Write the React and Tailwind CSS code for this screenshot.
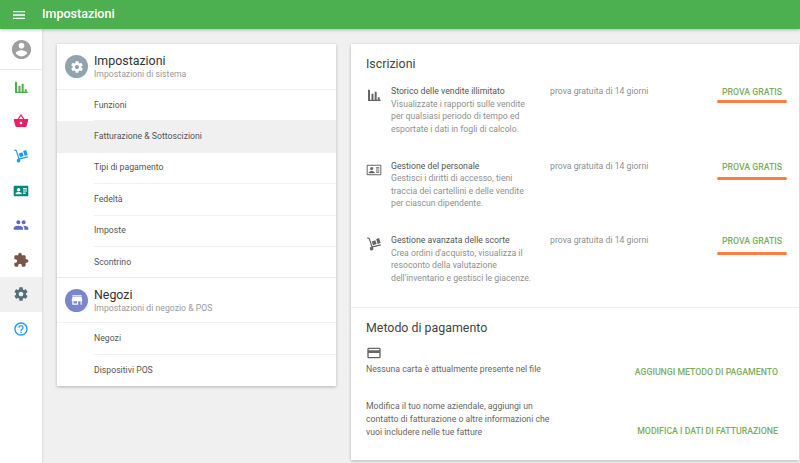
const ICONS = {
  menu: 'M3 18h18v-2H3v2zm0-5h18v-2H3v2zm0-7v2h18V6H3z',
  account: 'M12 2C6.48 2 2 6.48 2 12s4.48 10 10 10 10-4.48 10-10S17.52 2 12 2zm0 3c1.66 0 3 1.34 3 3s-1.34 3-3 3-3-1.34-3-3 1.34-3 3-3zm0 14.2c-2.5 0-4.71-1.28-6-3.22.03-1.99 4-3.08 6-3.08 1.99 0 5.97 1.09 6 3.08-1.29 1.94-3.5 3.22-6 3.22z',
  settings: 'M19.43 12.98c.04-.32.07-.64.07-.98s-.03-.66-.07-.98l2.11-1.65c.19-.15.24-.42.12-.64l-2-3.46c-.12-.22-.39-.3-.61-.22l-2.49 1c-.52-.4-1.08-.73-1.69-.98l-.38-2.65C14.46 2.18 14.25 2 14 2h-4c-.25 0-.46.18-.49.42l-.38 2.65c-.61.25-1.17.59-1.69.98l-2.49-1c-.23-.09-.49 0-.61.22l-2 3.46c-.13.22-.07.49.12.64l2.11 1.65c-.04.32-.07.65-.07.98s.03.66.07.98l-2.11 1.65c-.19.15-.24.42-.12.64l2 3.46c.12.22.39.3.61.22l2.49-1c.52.4 1.08.73 1.69.98l.38 2.65c.03.24.24.42.49.42h4c.25 0 .46-.18.49-.42l.38-2.65c.61-.25 1.17-.59 1.69-.98l2.49 1c.23.09.49 0 .61-.22l2-3.46c.12-.22.07-.49-.12-.64l-2.11-1.65zM12 15.5c-1.93 0-3.5-1.57-3.5-3.5s1.57-3.5 3.5-3.5 3.5 1.57 3.5 3.5-1.57 3.5-3.5 3.5z',
  people: 'M16 11c1.66 0 2.99-1.34 2.99-3S17.66 5 16 5c-1.66 0-3 1.34-3 3s1.34 3 3 3zm-8 0c1.66 0 2.99-1.34 2.99-3S9.66 5 8 5C6.34 5 5 6.34 5 8s1.34 3 3 3zm0 2c-2.33 0-7 1.17-7 3.5V19h14v-2.5c0-2.33-4.67-3.5-7-3.5zm8 0c-.29 0-.62.02-.97.05 1.16.84 1.97 1.97 1.97 3.45V19h6v-2.5c0-2.33-4.67-3.5-7-3.5z',
  extension: 'M20.5 11H19V7c0-1.1-.9-2-2-2h-4V3.5C13 2.12 11.88 1 10.5 1S8 2.12 8 3.5V5H4c-1.1 0-1.99.9-1.99 2v3.8H3.5c1.49 0 2.7 1.21 2.7 2.7s-1.21 2.7-2.7 2.7H2V20c0 1.1.9 2 2 2h3.8v-1.5c0-1.49 1.21-2.7 2.7-2.7 1.49 0 2.7 1.21 2.7 2.7V22H17c1.1 0 2-.9 2-2v-4h1.5c1.38 0 2.5-1.12 2.5-2.5S21.88 11 20.5 11z',
  help: 'M11 18h2v-2h-2v2zm1-16C6.48 2 2 6.48 2 12s4.48 10 10 10 10-4.48 10-10S17.52 2 12 2zm0 18c-4.41 0-8-3.59-8-8s3.59-8 8-8 8 3.59 8 8-3.59 8-8 8zm0-14c-2.21 0-4 1.79-4 4h2c0-1.1.9-2 2-2s2 .9 2 2c0 2-3 1.75-3 5h2c0-2.25 3-2.5 3-5 0-2.21-1.79-4-4-4z',
  store: 'M20 4H4v2h16V4zm1 10v-2l-1-5H4l-1 5v2h1v6h10v-6h4v6h2v-6h1zm-9 4H6v-4h6v4z',
  card: 'M20 4H4c-1.11 0-1.99.89-1.99 2L2 18c0 1.11.89 2 2 2h16c1.11 0 2-.89 2-2V6c0-1.11-.89-2-2-2zm0 14H4v-6h16v6zm0-10H4V6h16v2z',
  basket: 'M17.21 9l-4.38-6.56c-.19-.28-.51-.42-.83-.42-.32 0-.64.14-.83.43L6.79 9H2c-.55 0-1 .45-1 1 0 .09.01.18.04.27l2.54 9.27c.23.84 1 1.46 1.92 1.46h13c.92 0 1.69-.62 1.93-1.46l2.54-9.27L23 10c0-.55-.45-1-1-1h-4.79zM9 9l3-4.4L15 9H9zm3 8c-1.1 0-2-.9-2-2s.9-2 2-2 2 .9 2 2-.9 2-2 2z',
  // drawn by hand, nothing close in the packs
  sales: 'M3 4h3v15h2.2v-9h3v9h1.8V7h3v12h1.6v-3.5h3V19H22v2H3V4z',
  cart: 'M1.5 3.2l.8-1.5 3.4 1.8 4 12 12.3-3 .4 1.7-12 3a2.7 2.7 0 1 1-2.5-.9L4.4 4.8 1.5 3.2zM8.6 8.4l5.4-2 2 5.6-5.4 2-2-5.6zm6.6-3.9l4.4-1.5 2.4 7.4-4.4 1.5-2.4-7.4z',
  badge: 'M2.5 4h19A1.5 1.5 0 0 1 23 5.5v13a1.5 1.5 0 0 1-1.5 1.5h-19A1.5 1.5 0 0 1 1 18.5v-13A1.5 1.5 0 0 1 2.5 4zM8.5 7.5a2.6 2.6 0 1 0 0 5.2 2.6 2.6 0 0 0 0-5.2zM3.8 17h9.4v-1.2c0-1.7-3.1-2.4-4.7-2.4s-4.7.7-4.7 2.4V17zM15 8v1.6h6V8h-6zm0 3.2v1.6h6v-1.6h-6zm0 3.2V16h4v-1.6h-4z',
  badgeOutline: 'M2.5 4h19A1.5 1.5 0 0 1 23 5.5v13a1.5 1.5 0 0 1-1.5 1.5h-19A1.5 1.5 0 0 1 1 18.5v-13A1.5 1.5 0 0 1 2.5 4zm0 1.5v13h19v-13h-19zM8.5 7.5a2.4 2.4 0 1 1 0 4.8 2.4 2.4 0 0 1 0-4.8zM4 17v-1.2c0-1.6 3-2.4 4.5-2.4s4.5.8 4.5 2.4V17H4zm11-9h5v1.6h-5V8zm0 3.2h5v1.6h-5v-1.6zm0 3.2h5V16h-5v-1.6z',
};

function Icon({ name, className }) {
  return (
    <svg viewBox="0 0 24 24" className={className} fill="currentColor" fillRule="evenodd">
      <path d={ICONS[name]} />
    </svg>
  );
}

const NAV = [
  { icon: 'sales', color: 'text-[#4caf50]' },
  { icon: 'basket', color: 'text-[#e91e63]' },
  { icon: 'cart', color: 'text-[#2196f3]' },
  { icon: 'badge', color: 'text-[#00897b]' },
  { icon: 'people', color: 'text-[#5c6bc0]' },
  { icon: 'extension', color: 'text-[#795548]' },
  { icon: 'settings', color: 'text-[#546e7a]', active: true },
  { icon: 'help', color: 'text-[#2196f3]' },
];

const PLANS = [
  {
    icon: 'sales',
    title: 'Storico delle vendite illimitato',
    lines: ['Visualizzate i rapporti sulle vendite', 'per qualsiasi periodo di tempo ed', 'esportate i dati in fogli di calcolo.'],
    barGap: 'mt-[0px]',
  },
  {
    icon: 'badgeOutline',
    title: 'Gestione del personale',
    lines: ['Gestisci i diritti di accesso, tieni', 'traccia dei cartellini e delle vendite', 'per ciascun dipendente.'],
    barGap: 'mt-[2px]',
  },
  {
    icon: 'cart',
    title: 'Gestione avanzata delle scorte',
    lines: ["Crea ordini d'acquisto, visualizza il", 'resoconto della valutazione', "dell'inventario e gestisci le giacenze."],
    barGap: 'mt-[3px]',
  },
];

function SectionHead({ icon, bg, title, sub, height }) {
  return (
    <div className={`${height} flex items-center pl-[8px] border-b border-[#f2f2f2]`}>
      <div className={`w-[23px] h-[23px] rounded-full flex items-center justify-center text-white ${bg}`}>
        <Icon name={icon} className="w-[14px] h-[14px]" />
      </div>
      <div className="ml-[6px]">
        <div className="text-[12.4px] leading-[15px] text-[#333]">{title}</div>
        <div className="text-[8.7px] leading-[12px] text-[#9a9a9a]">{sub}</div>
      </div>
    </div>
  );
}

function SettingRow({ label, active, height = 'h-[31.4px]', last }) {
  return (
    <div className={`${height} flex ${active ? 'bg-[#f0f0f0]' : ''}`}>
      <div className={`ml-[37px] flex-1 flex items-center text-[8.7px] text-[#555] ${last ? '' : 'border-b border-[#f0f0f0]'}`}>
        {label}
      </div>
    </div>
  );
}

export default function App() {
  return (
    <div className="w-[800px] h-[463px] overflow-hidden flex flex-col bg-[#f0f0f0] font-['Roboto',sans-serif]">
      <header className="h-[29px] shrink-0 bg-[#4caf50] flex items-center pl-[11px] text-white shadow-[0_1px_3px_rgba(0,0,0,0.25)] z-10">
        <Icon name="menu" className="w-[16px] h-[16px]" />
        <span className="ml-[15px] text-[12.5px] font-medium">Impostazioni</span>
      </header>

      <div className="flex-1 flex min-h-0">
        <aside className="w-[42px] shrink-0 bg-white shadow-[1px_0_2px_rgba(0,0,0,0.08)]">
          <div className="h-[40.5px] pt-[1px] flex items-center justify-center border-b border-[#e8e8e8]">
            <Icon name="account" className="w-[23px] h-[23px] text-[#9e9e9e]" />
          </div>
          {NAV.map((n) => (
            <div key={n.icon} className={`h-[34.6px] flex items-center justify-center ${n.active ? 'bg-[#f0f0f0]' : ''}`}>
              <Icon name={n.icon} className={`w-[16px] h-[16px] ${n.color}`} />
            </div>
          ))}
        </aside>

        <main className="flex-1 flex items-start pt-[15px] pl-[15px] gap-[15px]">
          <section className="w-[279px] bg-white shadow-[0_1px_3px_rgba(0,0,0,0.25)]">
            <SectionHead icon="settings" bg="bg-[#90a4ae]" title="Impostazioni" sub="Impostazioni di sistema" height="h-[46px]" />
            <SettingRow label="Funzioni" />
            <SettingRow label="Fatturazione & Sottoscizioni" active />
            <SettingRow label="Tipi di pagamento" />
            <SettingRow label="Fedeltà" />
            <SettingRow label="Imposte" />
            <SettingRow label="Scontrino" height="h-[30.4px]" last />
            <div className="border-t border-[#eaeaea]">
              <SectionHead icon="store" bg="bg-[#7986cb]" title="Negozi" sub="Impostazioni di negozio & POS" height="h-[45px]" />
            </div>
            <SettingRow label="Negozi" />
            <SettingRow label="Dispositivi POS" last />
          </section>

          <section className="w-[448px] h-[416px] bg-white shadow-[0_1px_3px_rgba(0,0,0,0.25)] flex flex-col">
            <div className="h-[264px] border-b border-[#eeeeee] pl-[15px] pr-[12px] pt-[12px]">
              <h2 className="text-[12.4px] leading-[16px] font-normal text-[#444]">Iscrizioni</h2>
              <div className="mt-[13px] flex flex-col gap-[25px]">
                {PLANS.map((p) => (
                  <div key={p.title} className="flex h-[49.5px]">
                    <Icon name={p.icon} className="w-[16px] h-[16px] mt-[2px] text-[#666] shrink-0" />
                    <div className="ml-[9px] w-[151px] text-[8.7px] leading-[12.5px] whitespace-nowrap">
                      <div className="text-[#555]">{p.title}</div>
                      {p.lines.map((l) => (
                        <div key={l} className="text-[#8f8f8f]">{l}</div>
                      ))}
                    </div>
                    <div className="ml-[8px] flex-1 text-[8.7px] leading-[12.5px] text-[#8f8f8f]">prova gratuita di 14 giorni</div>
                    <div className="w-[70px] flex flex-col items-center">
                      <span className="text-[8.75px] leading-[15px] font-medium text-[#7cad5f]">PROVA GRATIS</span>
                      <span className={`w-[70px] h-[3px] rounded-full bg-[#ff7f41] ${p.barGap}`} />
                    </div>
                  </div>
                ))}
              </div>
            </div>

            <div className="flex-1 pl-[15px] pr-[21px] pt-[12px]">
              <h2 className="text-[12.4px] leading-[16px] font-normal text-[#444]">Metodo di pagamento</h2>
              <Icon name="card" className="w-[16px] h-[16px] mt-[9px] text-[#666]" />
              <div className="flex items-end justify-between mt-[2px]">
                <p className="text-[8.7px] leading-[12.5px] text-[#666] pb-[6px]">Nessuna carta è attualmente presente nel file</p>
                <span className="text-[8.75px] leading-[12.5px] font-medium text-[#7cad5f] pb-[3px]">AGGIUNGI METODO DI PAGAMENTO</span>
              </div>
              <div className="flex items-end justify-between mt-[18px]">
                <p className="text-[8.7px] leading-[13px] text-[#666]">
                  Modifica il tuo nome aziendale, aggiungi un<br />
                  contatto di fatturazione o altre informazioni che<br />
                  vuoi includere nelle tue fatture
                </p>
                <span className="text-[8.75px] leading-[12.5px] font-medium text-[#7cad5f] pb-[1px]">MODIFICA I DATI DI FATTURAZIONE</span>
              </div>
            </div>
          </section>
        </main>
      </div>
    </div>
  );
}
